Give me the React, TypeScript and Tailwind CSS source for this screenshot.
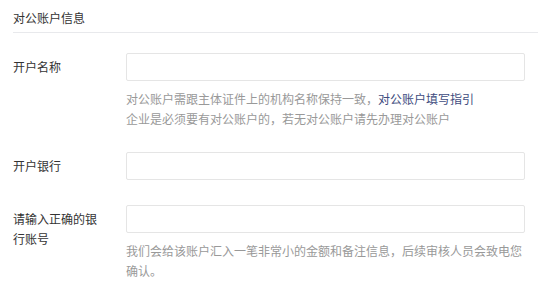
export default function App() {
  const font = { fontFamily: '"Noto Sans CJK SC", "Microsoft YaHei", sans-serif' };

  return (
    <div className="w-[538px] h-[288px] bg-white text-[12px] text-[#333]" style={font}>
      <div className="ml-[13px] h-[33px] pt-[8px] leading-[20px] border-b border-[#e8e9ec]">
        对公账户信息
      </div>

      <div className="pl-[13px] pr-[13px] pt-[20px]">
        <div className="flex">
          <div className="w-[90px] mr-[23px] pt-[4px] leading-[20px]">开户名称</div>
          <div className="flex-1">
            <input className="block w-full h-[28px] rounded-[2px] border border-[#e5e5e5] outline-none px-2" />
            <div className="mt-[8px] leading-[20px] text-[#999]">
              <div>
                对公账户需跟主体证件上的机构名称保持一致，
                <span className="text-[#3e4c7e]">对公账户填写指引</span>
              </div>
              <div>企业是必须要有对公账户的，若无对公账户请先办理对公账户</div>
            </div>
          </div>
        </div>

        <div className="flex mt-[23px]">
          <div className="w-[90px] mr-[23px] pt-[4px] leading-[20px]">开户银行</div>
          <div className="flex-1">
            <input className="block w-full h-[28px] rounded-[2px] border border-[#e5e5e5] outline-none px-2" />
          </div>
        </div>

        <div className="flex mt-[25px]">
          <div className="w-[90px] mr-[23px] pt-[4px] leading-[20px]">请输入正确的银行账号</div>
          <div className="flex-1">
            <input className="block w-full h-[28px] rounded-[2px] border border-[#e5e5e5] outline-none px-2" />
            <div className="mt-[8px] leading-[19.5px] text-[#999]">
              我们会给该账户汇入一笔非常小的金额和备注信息，后续审核人员会致电您确认。
            </div>
          </div>
        </div>
      </div>
    </div>
  );
}
